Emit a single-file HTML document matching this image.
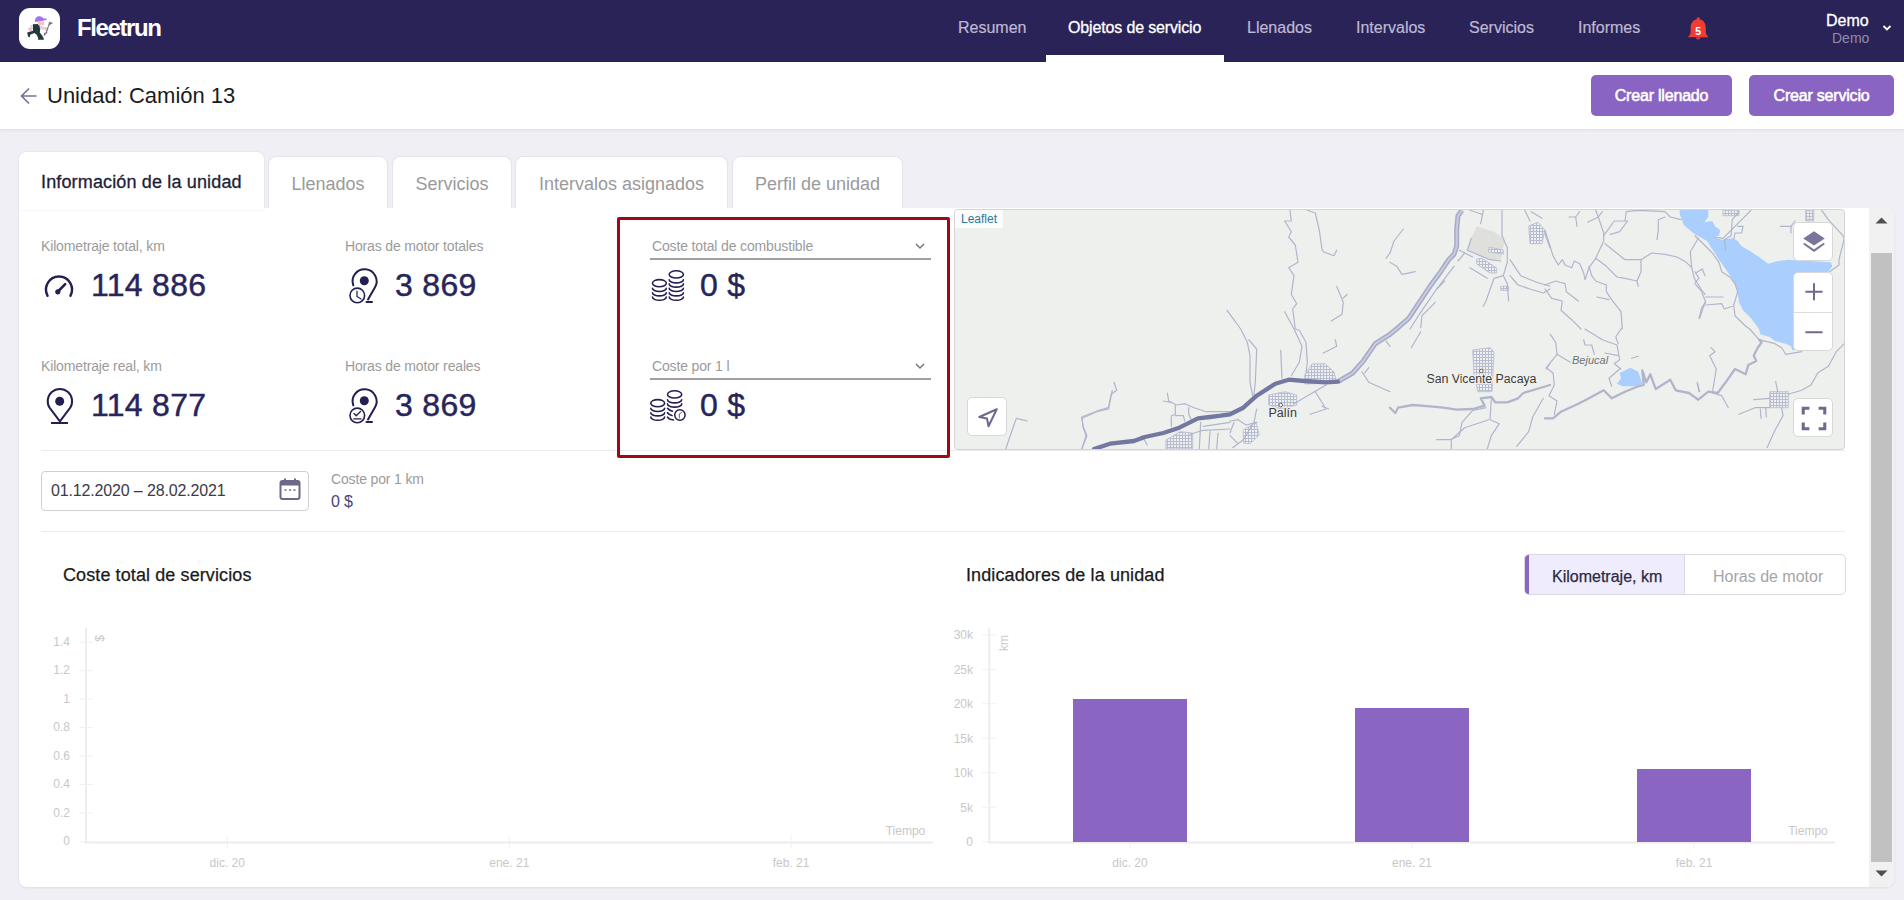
<!DOCTYPE html>
<html><head><meta charset="utf-8">
<style>
*{box-sizing:border-box;margin:0;padding:0}
html,body{width:1904px;height:900px;overflow:hidden;background:#f0eff5;font-family:"Liberation Sans",sans-serif}
.a{position:absolute;white-space:nowrap}
#hdr{position:absolute;left:0;top:0;width:1904px;height:62px;background:#2a2358}
#logo{left:19px;top:8px;width:41px;height:41px;background:#fff;border-radius:11px}
.brand{left:77px;top:14px;font-size:24px;font-weight:bold;color:#fff;letter-spacing:-1.4px}
.nav{top:19px;font-size:16px;color:#bdb9d3;-webkit-text-stroke:0.2px #bdb9d3}
.nav.act{color:#fff;-webkit-text-stroke:0.3px #fff;letter-spacing:-0.15px}
#uline{left:1046px;top:55px;width:178px;height:7px;background:#fff}
#sub{position:absolute;left:0;top:62px;width:1904px;height:67px;background:#fff;box-shadow:0 1px 3px rgba(0,0,0,0.08)}
.title{left:47px;top:83px;font-size:22px;color:#1b1b1b}
.btn{top:75px;height:41px;background:#8a64c2;border-radius:5px;color:#fff;font-size:16px;font-weight:normal;-webkit-text-stroke:0.55px #fff;letter-spacing:-0.2px;text-align:center;line-height:41px}
.tab{top:157px;height:51px;background:#fff;border-radius:7px 7px 0 0;color:#9a9a9a;font-size:18px;line-height:55px;text-align:center;box-shadow:0 0 1px 1px rgba(0,0,0,0.05)}
.tab.act{top:152px;height:58px;color:#1e1e36;font-size:18px;line-height:61px;z-index:2;box-shadow:0 0 2px 0 rgba(0,0,0,0.12);text-align:left;padding-left:22px;-webkit-text-stroke:0.3px #1e1e36;letter-spacing:0.15px}
#card{left:19px;top:208px;width:1875px;height:679px;background:#fff;border-radius:0 8px 8px 8px;box-shadow:0 1px 3px rgba(0,0,0,0.08)}
.lbl{font-size:14px;color:#9b9b9b;letter-spacing:-0.15px}
.val{font-size:32px;font-weight:normal;color:#27255a;letter-spacing:0.3px;-webkit-text-stroke:0.45px #27255a}
.mbtn{background:#fff;border:1px solid #d8d8d8;border-radius:5px;overflow:hidden}
.hr{height:1px;background:#ececf0}
</style></head><body>
<div id="hdr"></div>

<div class="a brand">Fleetrun</div>
<div class="a nav" style="left:958px">Resumen</div>
<div class="a nav act" style="left:1068px">Objetos de servicio</div>
<div class="a nav" style="left:1247px">Llenados</div>
<div class="a nav" style="left:1356px">Intervalos</div>
<div class="a nav" style="left:1469px">Servicios</div>
<div class="a nav" style="left:1578px">Informes</div>
<div class="a" id="uline"></div>
<div class="a" style="left:1826px;top:12px;font-size:16px;color:#fff;-webkit-text-stroke:0.3px #fff">Demo</div>
<div class="a" style="left:1832px;top:30px;font-size:14px;color:#8f8aae">Demo</div>


<!-- header icons -->
<svg class="a" style="left:19px;top:8px" width="41" height="41" viewBox="0 0 41 41">
 <rect x="0" y="0" width="41" height="41" rx="11" fill="#fff"/>
 <path d="M11 17.5 L14.5 16 L15.5 20.5 L12.5 22 Z" fill="#dadae2"/>
 <path d="M19.5 17 L24 18.5 L27 20 L26 22 L21 21 Z" fill="#d6d6de"/>
 <path d="M14 16.2 L20 16 L21.2 21.5 L20.8 24.5 L23.5 28 L24.5 30 L25 31.8 L19 31.8 L19.2 30 L17.8 27 L15.5 25 L11.5 26.5 L10.5 29.5 L9 28.5 L8.2 24.5 L14 22.8 Z" fill="#223a3a"/>
 <circle cx="11.2" cy="21.2" r="1.9" fill="#f3bfc0"/>
 <circle cx="27.6" cy="21" r="1.9" fill="#f3bfc0"/>
 <path d="M18.7 13.5 L25 13.5 L25 17.2 L19 17.2 Z" fill="#f4c2c2"/>
 <path d="M15.9 13.7 C15.9 9.5 18 8.2 20.2 8.2 C22.6 8.2 24.1 9.4 24.4 10.5 L27.8 10.4 L27.6 11.8 L24 12.8 L16 13.9 Z" fill="#a472ee"/>
 <path d="M30 14 L29.5 16.2 L28 21 L26.6 24.5 L25.2 25 L24.6 27.5 L26 27.8 L26.8 25.8 L28.2 25.5 L28.2 23.5 L30 18 L31.5 16.4 L33.5 15.5 L33.7 14.2 L32.2 14.8 L31.4 13.8 Z" fill="#777"/>
</svg>
<svg class="a" style="left:1686px;top:16px" width="25" height="26" viewBox="0 0 25 26">
 <circle cx="12.2" cy="2.9" r="1.6" fill="#f03d33"/>
 <path d="M12.2 3.3 C6.8 3.3 4.6 7.5 4.6 12 L4.6 16 C4.6 18 3.8 19.2 2.4 20.2 L2.4 21.3 L22 21.3 L22 20.2 C20.6 19.2 19.8 18 19.8 16 L19.8 12 C19.8 7.5 17.6 3.3 12.2 3.3 Z" fill="#f03d33"/>
 <path d="M9.9 21.3 A2.3 2.4 0 0 0 14.5 21.3 Z" fill="#dc3440"/>
 <text x="12.2" y="19" font-family="Liberation Sans" font-weight="bold" font-size="10.5" fill="#fff" text-anchor="middle">5</text>
</svg>
<svg class="a" style="left:1880px;top:22px" width="14" height="12" viewBox="0 0 14 12"><path d="M3.5 4 L7 7.5 L10.5 4" fill="none" stroke="#fff" stroke-width="1.8"/></svg>

<div id="sub"></div>
<svg class="a" style="left:18px;top:85px" width="22" height="22" viewBox="0 0 22 22"><path d="M18.5 11 H4 M11 3.5 L3.5 11 L11 18.5" fill="none" stroke="#76739a" stroke-width="1.7"/></svg>

<div class="a title">Unidad: Camión 13</div>
<div class="a btn" style="left:1591px;width:141px">Crear llenado</div>
<div class="a btn" style="left:1749px;width:145px">Crear servicio</div>

<div class="a tab act" style="left:19px;width:245px">Información de la unidad</div>
<div class="a tab" style="left:269px;width:118px">Llenados</div>
<div class="a tab" style="left:393px;width:118px">Servicios</div>
<div class="a tab" style="left:516px;width:211px">Intervalos asignados</div>
<div class="a tab" style="left:733px;width:169px">Perfil de unidad</div>

<div class="a" id="card"></div>

<!-- card content -->
<div class="a lbl" style="left:41px;top:238px;line-height:16px">Kilometraje total, km</div>
<div class="a lbl" style="left:345px;top:238px;line-height:16px">Horas de motor totales</div>
<div class="a lbl" style="left:41px;top:358px;line-height:16px">Kilometraje real, km</div>
<div class="a lbl" style="left:345px;top:358px;line-height:16px">Horas de motor reales</div>
<div class="a val" style="left:91px;top:267px;line-height:36px">114 886</div>
<div class="a val" style="left:395px;top:267px;line-height:36px">3 869</div>
<div class="a val" style="left:91px;top:387px;line-height:36px">114 877</div>
<div class="a val" style="left:395px;top:387px;line-height:36px">3 869</div>
<div class="a val" style="left:700px;top:267px;line-height:36px">0 $</div>
<div class="a val" style="left:700px;top:387px;line-height:36px">0 $</div>

<!-- icons -->
<svg class="a" style="left:0;top:0" width="1000" height="460" viewBox="0 0 1000 460">
 <g fill="none" stroke="#231f52" stroke-width="2.4" stroke-linecap="round">
  <path d="M47.6 295.8 A13 13 0 1 1 70.4 295.8"/>
 </g>
 <g fill="#231f52" stroke="#231f52">
  <path d="M57.5 292 L65.2 284.2" stroke-width="2.6" stroke-linecap="round"/>
  <circle cx="57.8" cy="291.8" r="2.6" stroke="none"/>
 </g>
 <!-- pin -->
 <g fill="none" stroke="#231f52" stroke-width="2">
  <path d="M59.9 421.3 L49.9 408.2 A12.2 12.2 0 1 1 69.9 408.2 Z" stroke-linejoin="round"/>
  <path d="M51 423 H68" stroke-width="2"/>
 </g>
 <circle cx="59.7" cy="401.2" r="4.5" fill="#231f52"/>
 <!-- horas totales -->
 <g fill="none" stroke="#231f52" stroke-width="2" stroke-linecap="round">
  <path d="M353.3 285.3 A12 12 0 1 1 375 287.2 L368 299.5"/>
  <path d="M366.5 302 H372" stroke-width="2"/>
  <circle cx="357.3" cy="295.4" r="7.3" stroke-width="1.6"/>
  <path d="M357 291 V296.5 L361 299" stroke-width="1.2"/>
 </g>
 <circle cx="364.3" cy="280.8" r="4.5" fill="#231f52"/>
 <!-- horas reales -->
 <g fill="none" stroke="#231f52" stroke-width="2" stroke-linecap="round">
  <path d="M353.3 405.3 A12 12 0 1 1 375 407.2 L368 419.5"/>
  <path d="M366.5 422 H372" stroke-width="2"/>
  <circle cx="357.3" cy="415.4" r="7.3" stroke-width="1.6"/>
  <path d="M354 413.5 L356.2 415.8 L360.5 411.5" stroke-width="1.3"/>
  <path d="M353.8 418.8 H361" stroke-width="1.3"/>
 </g>
 <circle cx="364.3" cy="400.8" r="4.5" fill="#231f52"/>
 <!-- coins 1 -->
 <g fill="none" stroke="#231f52" stroke-width="1.6" stroke-linecap="round">
  <ellipse cx="659.4" cy="283.2" rx="6.9" ry="3.6"/>
  <path d="M652.5 288.3 A6.9 3.2 0 0 0 666.3 288.3"/>
  <path d="M652.5 292.7 A6.9 3.2 0 0 0 666.3 292.7"/>
  <path d="M652.5 297.1 A6.9 3.2 0 0 0 666.3 297.1"/>
  <ellipse cx="676.3" cy="274.4" rx="7.1" ry="3.6"/>
  <path d="M669.2 279.7 A7.1 3.2 0 0 0 683.4 279.7"/>
  <path d="M669.2 283.9 A7.1 3.2 0 0 0 683.4 283.9"/>
  <path d="M669.2 288.3 A7.1 3.2 0 0 0 683.4 288.3"/>
  <path d="M669.2 292.7 A7.1 3.2 0 0 0 683.4 292.7"/>
  <path d="M669.2 297.1 A7.1 3.2 0 0 0 683.4 297.1"/>
 </g>
 <!-- coins 2 -->
 <g fill="none" stroke="#231f52" stroke-width="1.6" stroke-linecap="round">
  <ellipse cx="657.7" cy="403.2" rx="6.9" ry="3.6"/>
  <path d="M650.8 408.3 A6.9 3.2 0 0 0 664.6 408.3"/>
  <path d="M650.8 412.7 A6.9 3.2 0 0 0 664.6 412.7"/>
  <path d="M650.8 417.1 A6.9 3.2 0 0 0 664.6 417.1"/>
  <ellipse cx="674.6" cy="394.4" rx="7.1" ry="3.6"/>
  <path d="M667.5 399.7 A7.1 3.2 0 0 0 681.7 399.7"/>
  <path d="M667.5 403.9 A7.1 3.2 0 0 0 681.7 403.9"/>
  <path d="M667.5 408.3 Q669 410.5 672.5 411.2"/>
  <path d="M667.5 412.7 Q669 414.9 672 415.5"/>
  <path d="M667.5 417.1 Q669 419.5 673.5 420"/>
  <circle cx="679.9" cy="415" r="5.2" stroke-width="1.5"/>
  <path d="M679.3 418 V414 L681.5 412.5" stroke-width="1" stroke="#6a5a6a"/>
 </g>
</svg>

<!-- dropdowns -->
<div class="a lbl" style="left:652px;top:238px;line-height:16px">Coste total de combustible</div>
<div class="a" style="left:650px;top:258px;width:281px;height:2px;background:#a0a0a0"></div>
<div class="a lbl" style="left:652px;top:358px;line-height:16px">Coste por 1 l</div>
<div class="a" style="left:650px;top:378px;width:281px;height:2px;background:#a0a0a0"></div>
<svg class="a" style="left:912px;top:240px" width="16" height="12"><path d="M4 4 L8 8 L12 4" fill="none" stroke="#777" stroke-width="1.5"/></svg>
<svg class="a" style="left:912px;top:360px" width="16" height="12"><path d="M4 4 L8 8 L12 4" fill="none" stroke="#777" stroke-width="1.5"/></svg>


<div class="a hr" style="left:41px;top:450px;width:1804px"></div>
<div class="a" style="left:617px;top:217px;width:333px;height:241px;border:3px solid #a10814;border-radius:2px"></div>

<!-- date -->
<div class="a" style="left:41px;top:471px;width:268px;height:40px;border:1px solid #cfcfd4;border-radius:4px"></div>
<div class="a" style="left:51px;top:482px;font-size:16px;line-height:18px;color:#3a3a48;letter-spacing:-0.15px">01.12.2020 – 28.02.2021</div>
<svg class="a" style="left:278px;top:477px" width="24" height="24" viewBox="0 0 24 24"><rect x="2.5" y="4" width="19" height="18" rx="2" fill="none" stroke="#6f6788" stroke-width="2"/><rect x="2.5" y="4" width="19" height="4.5" fill="#6f6788"/><path d="M7 1.5V6M17 1.5V6" stroke="#6f6788" stroke-width="2"/><path d="M6.5 13h2M11 13h2M15.5 13h2" stroke="#6f6788" stroke-width="1.6"/></svg>
<div class="a lbl" style="left:331px;top:471px;line-height:16px">Coste por 1 km</div>
<div class="a" style="left:331px;top:492px;font-size:16px;line-height:19px;color:#46447a;letter-spacing:-0.2px">0 $</div>
<div class="a hr" style="left:41px;top:531px;width:1804px"></div>


<!-- map -->
<div class="a" style="left:954px;top:209px;width:891px;height:241px;border:1px solid #d4d4d4;border-radius:4px;overflow:hidden;background:#eef0ee">
<svg width="891" height="241" viewBox="954 209 891 241" style="position:absolute;left:-1px;top:-1px">
<polygon points="1679.7,209.0 1708.3,209.0 1708.3,217.0 1704.3,222.3 1712.3,221.0 1715.0,226.3 1720.3,230.3 1719.0,235.7 1713.7,237.0 1721.7,239.7 1732.3,238.3 1737.7,241.0 1741.7,246.3 1751.0,251.7 1759.0,257.0 1768.3,263.7 1777.7,261.0 1788.3,259.7 1831.0,262.3 1832.3,266.3 1828.3,271.7 1815.0,275.0 1815.0,345.0 1792.3,350.3 1791.0,346.3 1785.7,343.7 1775.0,341.0 1769.7,337.0 1760.3,334.3 1759.0,329.0 1751.0,318.3 1743.0,310.3 1739.0,302.3 1736.3,286.3 1728.3,273.0 1719.0,259.7 1707.0,241.0 1695.0,234.3 1691.7,231.7 1683.7,225.0 1679.7,214.0" fill="#aacffe"/>
<polygon points="1619.7,373.0 1630.3,367.7 1638.3,371.7 1642.3,383.7 1637.0,386.3 1622.3,386.3 1617.0,383.7 1621.0,378.3" fill="#aacffe"/>
<polygon points="1476.7,226.3 1494.0,231.7 1504.7,239.7 1500.7,261.0 1490.0,259.7 1467.3,250.3 1471.3,238.3" fill="#dfe0dc"/>
<defs><pattern id="grid" width="3" height="3" patternUnits="userSpaceOnUse"><rect width="3" height="3" fill="#eef0ee"/><path d="M0 0.5H3M0.5 0V3" stroke="#b8bcd0" stroke-width="1"/></pattern></defs>
<g fill="url(#grid)" stroke="#c0c3d6" stroke-width="1"><polygon points="1304.7,375.0 1312.0,364.0 1325.0,363.7 1334.0,372.0 1336.7,383.0 1305.0,384.0"/><polygon points="1268.7,395.0 1285.0,391.7 1296.7,395.0 1296.7,405.0 1280.0,409.0 1268.7,405.0"/><polygon points="1472.7,350.0 1490.0,347.7 1494.0,352.0 1492.0,391.7 1478.0,391.7 1474.0,375.0"/><polygon points="1769.7,391.7 1788.3,391.7 1788.3,407.7 1769.7,407.7"/><polygon points="1166.0,440.0 1180.0,431.7 1192.7,433.0 1192.7,449.0 1166.0,449.0"/><polygon points="1243.3,430.0 1256.0,422.3 1259.3,435.0 1250.0,443.7 1243.3,443.0"/><polygon points="1528.7,226.0 1538.0,222.3 1544.7,230.0 1542.0,243.7 1530.0,243.7"/><polygon points="1476.7,259.0 1482.0,258.3 1496.7,268.0 1496.7,273.0 1490.0,273.0 1476.7,264.0"/><polygon points="1488.7,247.0 1503.3,250.0 1503.3,254.3 1488.7,252.0"/><polygon points="1500.7,286.3 1508.7,286.3 1508.7,290.3 1500.7,290.3"/><polygon points="1723.0,210.3 1739.0,210.3 1739.0,215.7 1723.0,215.7"/><polygon points="1805.7,210.3 1813.7,210.3 1813.7,221.0 1805.7,221.0"/></g>
<g fill="none" stroke="#b1b5cb" stroke-width="1.2" stroke-linejoin="round" stroke-linecap="round"><path d="M1545.0 230.3 L1553.0 255.7 L1558.3 265.0 L1562.3 259.7 L1565.0 265.0 L1571.7 267.7 L1574.3 261.0 L1579.7 263.7 L1583.7 273.0 L1585.0 279.7 L1589.0 267.7 L1595.7 258.3 L1603.7 241.0 L1603.7 233.0 L1598.3 217.0 L1595.7 210.3"/><path d="M1595.7 258.3 L1606.3 266.3 L1617.0 277.0 L1625.0 278.3 L1637.0 281.0 L1638.3 286.3"/><path d="M1637.0 281.0 L1641.0 271.7 L1641.0 259.7 L1625.0 259.7 L1605.0 243.7"/><path d="M1641.0 259.7 L1651.7 253.0 L1665.0 254.3 L1677.0 257.0 L1686.3 262.3 L1691.7 267.7 L1694.3 278.3 L1701.0 289.0 L1705.0 294.3"/><path d="M1691.7 267.7 L1690.3 251.7 L1698.3 238.3"/><path d="M1603.7 235.7 L1614.3 221.0 L1627.7 221.0 L1619.7 231.7 L1610.3 234.3"/><path d="M1625.0 221.0 L1626.3 211.7 L1638.3 210.3 L1665.0 211.7 L1670.3 217.0 L1681.0 219.7"/><path d="M1665.0 217.0 L1658.3 219.7 L1658.3 230.3 L1657.0 239.7"/><path d="M1589.0 266.3 L1591.7 275.7 L1595.7 281.0 L1606.3 285.0 L1606.3 291.7 L1611.7 299.7 L1621.0 311.7 L1622.3 329.0 L1621.0 329.0"/><path d="M1597.0 297.0 L1609.0 299.7"/><path d="M1545.0 285.0 L1555.7 281.0 L1565.0 283.7 L1566.3 291.7 L1578.3 301.0"/><path d="M1545.0 289.0 L1551.7 298.3 L1562.3 301.0 L1561.0 310.3 L1571.7 319.7 L1581.0 329.0"/><path d="M1569.0 217.0 L1575.7 217.0 L1577.0 226.3"/><path d="M1575.7 217.0 L1579.7 211.7"/><path d="M1587.7 222.3 L1598.3 217.0 L1602.3 211.7"/><path d="M1705.0 302.3 L1699.7 318.3"/><path d="M1695.7 273.0 L1702.3 269.0 L1705.0 275.7"/><path d="M1550.3 334.3 L1555.7 342.3 L1557.0 354.3 L1570.3 362.3"/><path d="M1557.0 354.3 L1546.3 367.7 L1553.0 373.0 L1554.3 385.0 L1549.0 395.7 L1557.0 401.0 L1554.3 414.3"/><path d="M1585.0 329.0 L1602.3 339.7 L1617.0 345.0 L1619.7 359.7 L1614.3 363.7 L1621.0 369.0"/><path d="M1621.0 329.0 L1615.7 337.0 L1618.3 343.7"/><path d="M1619.7 369.0 L1609.0 378.3 L1611.7 386.3"/><path d="M1583.7 339.7 L1585.0 345.0 L1591.7 345.0 L1594.3 354.3"/><path d="M1605.0 353.0 L1618.3 355.7"/><path d="M1631.7 358.3 L1638.3 356.3"/><path d="M1697.0 382.3 L1699.7 391.7"/><path d="M1695.0 235.7 L1705.7 246.3 L1712.3 253.0 L1719.0 262.3 L1721.7 271.7 L1729.7 277.0 L1735.0 283.7 L1737.7 291.7 L1733.7 305.0 L1735.0 315.7 L1745.7 326.3 L1749.7 329.0 L1759.0 339.7 L1775.0 343.7 L1781.7 347.7 L1785.7 354.3 L1801.7 351.7"/><path d="M1695.0 271.7 L1699.0 278.3 L1695.0 282.3"/><path d="M1695.0 283.7 L1701.7 291.7 L1705.7 302.3 L1701.7 307.7 L1699.0 318.3"/><path d="M1705.7 297.0 L1723.0 297.0"/><path d="M1705.7 305.0 L1721.7 303.7 L1724.3 309.0 L1732.3 306.3"/><path d="M1713.7 237.0 L1723.0 238.3 L1735.0 226.3 L1751.0 210.3"/><path d="M1725.7 250.3 L1724.3 239.7 L1731.0 235.7 L1732.3 219.7 L1739.0 211.7"/><path d="M1733.7 239.7 L1735.0 233.0 L1741.7 233.0 L1743.0 226.3 L1737.7 226.3"/><path d="M1780.3 226.3 L1791.0 226.3 L1791.0 233.0"/><path d="M1791.0 226.3 L1795.0 221.0"/><path d="M1821.7 210.3 L1828.3 219.7 L1843.0 235.7 L1844.3 238.3 L1839.0 259.7 L1839.0 265.0 L1829.7 271.7"/><path d="M1711.0 347.7 L1715.0 351.7 L1709.7 355.7 L1716.3 369.0 L1712.3 393.0 L1721.7 395.7 L1728.3 407.7"/><path d="M1697.7 383.7 L1699.0 391.7"/><path d="M1844.3 343.7 L1836.3 351.7 L1828.3 366.3 L1817.7 373.0 L1811.0 385.0 L1801.7 390.3 L1788.3 394.3"/><path d="M1781.7 407.7 L1783.0 415.7 L1775.0 430.3 L1767.0 447.7"/><path d="M1739.0 414.3 L1755.0 407.7 L1769.7 407.7"/><path d="M1753.7 399.7 L1769.7 398.3"/><path d="M1760.3 409.0 L1761.0 418.3"/><path d="M1765.7 407.7 L1766.3 417.0"/><path d="M1775.7 381.7 L1777.7 391.7"/><path d="M1454.0 266.3 L1436.7 289.0 L1419.3 314.3 L1410.0 329.0"/><path d="M1459.3 250.3 L1472.7 257.0"/><path d="M1464.7 253.0 L1458.0 261.0"/><path d="M1444.7 281.0 L1436.7 289.0"/><path d="M1435.3 302.3 L1422.0 315.7 L1420.7 327.7"/><path d="M1403.3 229.0 L1394.0 241.0 L1390.0 253.0"/><path d="M1390.0 262.3 L1396.7 266.3 L1402.0 274.3 L1415.3 271.7"/><path d="M1502.0 210.3 L1502.0 235.7 L1507.3 247.7 L1507.3 262.3 L1503.3 275.7 L1494.0 278.3 L1486.0 301.0 L1483.3 306.3"/><path d="M1470.0 267.7 L1487.3 278.3"/><path d="M1503.3 275.7 L1507.3 283.7 L1508.7 301.0"/><path d="M1510.0 259.7 L1520.7 275.7 L1536.7 282.3 L1550.0 286.3"/><path d="M1510.0 275.7 L1518.0 285.0 L1530.0 289.0 L1543.3 293.0 L1550.0 289.0"/><path d="M1524.7 210.3 L1530.0 221.0"/><path d="M1531.3 211.7 L1542.0 218.3"/><path d="M1544.7 233.0 L1550.0 247.7"/><path d="M1483.3 210.3 L1480.7 223.7"/><path d="M1470.0 210.3 L1482.0 214.3"/><path d="M1471.3 238.3 L1467.3 250.3 L1490.0 259.7 L1500.7 261.0"/><path d="M1486.0 407.7 L1472.7 410.3 L1462.0 422.3 L1459.3 435.7 L1450.0 439.7 L1436.7 439.7"/><path d="M1491.3 399.7 L1490.0 419.7 L1499.3 423.7 L1491.3 435.7 L1487.3 449.0"/><path d="M1488.7 419.7 L1464.7 427.7 L1451.3 439.7 L1451.3 449.0"/><path d="M1543.3 398.3 L1532.7 417.0 L1528.7 431.7 L1516.7 446.3"/><path d="M1546.0 369.0 L1550.0 363.7"/><path d="M1420.7 331.7 L1411.3 347.7"/><path d="M1290.0 210.3 L1291.3 221.0 L1284.7 221.0 L1291.3 231.7 L1288.7 237.0 L1295.3 245.0 L1298.0 262.3 L1288.7 267.7 L1294.0 275.7 L1291.3 294.3 L1296.7 303.7 L1292.7 309.0 L1295.3 329.0 L1299.3 330.3 L1306.0 342.3 L1307.3 362.3 L1306.0 373.0"/><path d="M1307.3 210.3 L1315.3 213.0 L1319.3 230.3 L1322.0 249.0 L1323.3 251.7 L1334.0 255.7 L1336.7 250.3"/><path d="M1336.7 286.3 L1343.3 302.3 L1342.0 314.3 L1331.3 321.0"/><path d="M1343.3 298.0 L1347.3 294.3"/><path d="M1284.7 311.7 L1294.0 329.0 L1302.0 346.3 L1299.3 362.3 L1291.3 375.7"/><path d="M1227.0 310.3 L1230.0 314.3 L1240.7 329.0 L1247.3 342.3 L1250.0 355.7 L1250.0 382.3 L1252.7 395.7"/><path d="M1390.0 253.0 L1386.0 258.3"/><path d="M1248.7 339.7 L1256.7 349.0 L1255.3 382.3 L1254.0 394.3"/><path d="M1280.7 350.3 L1282.0 378.3"/><path d="M1335.3 339.7 L1336.7 346.3 L1323.3 353.0"/><path d="M1294.0 403.7 L1326.0 385.0"/><path d="M1315.3 391.7 L1326.0 409.0 L1310.0 414.3"/><path d="M1322.0 406.3 L1328.7 409.0"/><path d="M1362.0 371.7 L1368.7 382.3 L1390.0 391.7"/><path d="M1368.7 367.7 L1364.7 373.0"/><path d="M1386.0 341.0 L1390.0 346.3"/><path d="M1256.7 409.0 L1254.0 422.3 L1243.3 439.7 L1232.7 447.7"/><path d="M1230.0 421.0 L1238.0 419.7 L1246.0 425.0 L1256.7 422.3"/><path d="M1230.0 435.7 L1238.0 443.7"/><path d="M1234.0 422.3 L1230.0 433.0"/><path d="M1114.0 382.3 L1116.7 390.3 L1111.3 394.3 L1108.7 409.0 L1096.7 411.7 L1082.0 418.3 L1083.3 427.7 L1086.0 435.7 L1082.0 449.0"/><path d="M1167.3 393.0 L1168.7 401.0 L1176.7 405.0 L1184.7 403.7 L1194.0 407.7 L1206.0 411.7 L1230.0 411.7"/><path d="M1163.3 401.0 L1171.3 402.3"/><path d="M1175.3 405.0 L1175.3 414.3 L1171.3 415.7 L1171.3 426.3"/><path d="M1175.3 415.7 L1183.3 415.7 L1184.7 421.0"/><path d="M1188.7 407.7 L1188.7 414.3 L1192.7 422.3"/><path d="M1190.0 434.3 L1203.3 430.3 L1230.0 429.0"/><path d="M1203.3 426.3 L1230.0 422.3"/><path d="M1200.7 422.3 L1199.3 449.0"/><path d="M1210.0 431.7 L1208.7 449.0"/><path d="M1218.0 433.0 L1216.7 449.0"/><path d="M1142.0 435.7 L1147.3 445.0"/><path d="M1005.7 449.0 L1016.3 418.3 L1021.7 419.7 L1027.0 421.0"/><path d="M1081.7 449.0 L1087.0 435.7 L1083.0 426.3 L1081.7 417.0 L1099.0 410.3 L1108.3 407.7 L1112.3 390.3"/></g>
<g fill="none" stroke="#b1b5cb" stroke-width="2.3" stroke-linejoin="round" stroke-linecap="round"><path d="M1545.0 418.3 L1553.0 418.3 L1561.0 411.7 L1578.3 403.7 L1589.0 398.3 L1603.7 390.3 L1611.7 398.3 L1625.0 391.7 L1638.3 386.3 L1643.7 385.0 L1642.3 370.3 L1646.3 382.3 L1650.3 374.3 L1655.7 389.0 L1670.3 379.7 L1675.7 390.3 L1689.0 393.0 L1698.3 399.7 L1708.3 391.7 L1717.7 393.0 L1725.7 382.3 L1735.0 369.0 L1745.7 374.3 L1748.3 365.0 L1756.3 361.0 L1753.7 355.7 L1757.7 347.7 L1761.7 342.3 L1759.0 339.7"/><path d="M1390.0 407.7 L1395.3 413.0 L1398.0 407.7 L1412.7 405.0 L1430.0 406.3 L1443.3 407.7 L1456.7 409.7 L1472.7 409.0 L1484.7 405.7 L1480.7 398.3 L1491.3 397.0 L1495.3 402.3 L1507.3 402.3 L1518.0 398.3 L1523.3 393.0 L1536.7 389.0 L1550.0 385.0"/></g>
<path d="M1338.0 381.7 L1352.7 373.0 L1363.3 361.0 L1375.3 343.7 L1390.0 334.3 L1398.0 327.7 L1408.7 318.3 L1419.3 302.3 L1430.0 286.3 L1440.7 271.7 L1448.7 259.7 L1454.0 254.3 L1456.7 246.3 L1456.7 229.0 L1458.0 215.7 L1462.0 210.3" fill="none" stroke="#a6aac6" stroke-width="5" stroke-linejoin="round"/>
<path d="M1338.0 381.7 L1352.7 373.0 L1363.3 361.0 L1375.3 343.7 L1390.0 334.3 L1398.0 327.7 L1408.7 318.3 L1419.3 302.3 L1430.0 286.3 L1440.7 271.7 L1448.7 259.7 L1454.0 254.3 L1456.7 246.3 L1456.7 229.0 L1458.0 215.7 L1462.0 210.3" fill="none" stroke="#c9cce0" stroke-width="2" stroke-linejoin="round"/>
<path d="M1094.0 449.0 L1110.0 443.7 L1134.0 441.0 L1144.7 437.0 L1163.3 433.0 L1179.3 427.7 L1198.0 418.3 L1210.0 417.0 L1220.7 415.7 L1230.0 414.3 L1243.3 407.7 L1256.7 395.7 L1275.3 383.7 L1288.7 379.7 L1304.7 381.0 L1326.0 382.3 L1338.0 381.7" fill="none" stroke="#7378a1" stroke-width="4.3" stroke-linejoin="round" stroke-linecap="round"/>
<circle cx="1280.7" cy="405" r="1.8" fill="#fff" stroke="#666" stroke-width="1"/>
<circle cx="1481.3" cy="371" r="1.8" fill="#fff" stroke="#666" stroke-width="1"/>
<g font-family="Liberation Sans" fill="#3a3a3a" stroke="#eef0ee" stroke-width="2.5" paint-order="stroke" stroke-linejoin="round"><text x="1268.5" y="417" font-size="12.5">Palín</text><text x="1426.5" y="383" font-size="12.5" textLength="110">San Vicente Pacaya</text><text x="1572" y="364.3" font-size="11" font-style="italic" fill="#707070">Bejucal</text></g>
</svg>
<div style="position:absolute;left:0;top:0;width:48px;height:18px;background:rgba(255,255,255,0.8);font-size:12px;line-height:18px;color:#2a7898;padding-left:6px">Leaflet</div>
</div>
<div class="a mbtn" style="left:967px;top:397px;width:40px;height:39px"><svg width="40" height="39" viewBox="0 0 39 38"><path d="M28 11 L11 18.5 L18.5 20 L20 27.5 Z" fill="none" stroke="#6c6a8e" stroke-width="2" stroke-linejoin="round"/></svg></div>
<div class="a mbtn" style="left:1793px;top:222px;width:40px;height:39px"><svg width="40" height="39" viewBox="0 0 39 38"><path d="M19.5 8 L30 15 L19.5 22 L9 15 Z" fill="#7a7699"/><path d="M9.5 20 L19.5 27 L29.5 20" fill="none" stroke="#7a7699" stroke-width="2"/></svg></div>
<div class="a mbtn" style="left:1793px;top:272px;width:40px;height:79px"><div style="position:absolute;left:0;top:39px;width:38px;height:1px;background:#dcdcdc"></div><svg width="40" height="79" viewBox="0 0 39 78"><path d="M19.5 10 V27 M11 18.5 H28" stroke="#6c6a8e" stroke-width="2"/><path d="M11 58.5 H28" stroke="#6c6a8e" stroke-width="2"/></svg></div>
<div class="a mbtn" style="left:1793px;top:398px;width:40px;height:39px"><svg width="40" height="39" viewBox="0 0 39 38"><path d="M9 15 V9 H15 M24 9 H30 V15 M30 23 V29 H24 M15 29 H9 V23" fill="none" stroke="#6c6a8e" stroke-width="3"/></svg></div>

<!-- scrollbar -->
<div class="a" style="left:1869px;top:208px;width:25px;height:679px;background:#f1f1f1;border-radius:0 8px 8px 0"></div>
<div class="a" style="left:1871px;top:253px;width:21px;height:609px;background:#c1c1c1"></div>
<svg class="a" style="left:1869px;top:208px" width="25" height="678"><path d="M6.5 15.5 L12.5 9.5 L18.5 15.5 Z" fill="#505050"/><path d="M6.5 662.5 L12.5 668.5 L18.5 662.5 Z" fill="#505050"/></svg>

<svg class="a" style="left:0;top:0" width="1904" height="900" viewBox="0 0 1904 900">
<g stroke="#ececec" stroke-width="2" fill="none">
<path d="M86 628 V842.5 H933"/>
<path d="M989.3 628 V842.5 H1835"/>
</g>
<g stroke="#f0f0f0" stroke-width="1" fill="none">
<path d="M79 642.2 H93"/><path d="M79 670.6 H93"/><path d="M79 699.1 H93"/><path d="M79 727.6 H93"/><path d="M79 756.0 H93"/><path d="M79 784.5 H93"/><path d="M79 813.0 H93"/><path d="M79 841.8 H93"/><path d="M982 634.9 H996"/><path d="M982 669.4 H996"/><path d="M982 703.8 H996"/><path d="M982 738.3 H996"/><path d="M982 772.8 H996"/><path d="M982 807.2 H996"/><path d="M982 841.7 H996"/><path d="M227.3 835 V848.5"/><path d="M509.3 835 V848.5"/><path d="M791 835 V848.5"/><path d="M1130 835 V848.5"/><path d="M1412 835 V848.5"/><path d="M1694 835 V848.5"/>
</g>
<g font-family="Liberation Sans" font-size="12" fill="#c8c8c8" text-anchor="end">
<text x="70" y="645.7">1.4</text><text x="70" y="674.1">1.2</text><text x="70" y="702.6">1</text><text x="70" y="731.1">0.8</text><text x="70" y="759.5">0.6</text><text x="70" y="788.0">0.4</text><text x="70" y="816.5">0.2</text><text x="70" y="845.3">0</text><text x="973" y="639.1999999999999">30k</text><text x="973" y="673.6999999999999">25k</text><text x="973" y="708.0999999999999">20k</text><text x="973" y="742.5999999999999">15k</text><text x="973" y="777.0999999999999">10k</text><text x="973" y="811.5">5k</text><text x="973" y="846.0">0</text>
</g>
<g font-family="Liberation Sans" font-size="12" fill="#c8c8c8" text-anchor="middle">
<text x="227.3" y="867">dic. 20</text><text x="509.3" y="867">ene. 21</text><text x="791" y="867">feb. 21</text><text x="1130" y="867">dic. 20</text><text x="1412" y="867">ene. 21</text><text x="1694" y="867">feb. 21</text><text x="905.5" y="835" >Tiempo</text><text x="1808" y="835">Tiempo</text><text transform="translate(103.5 638.5) rotate(-90)" x="0" y="0">$</text><text transform="translate(1007.5 643) rotate(-90)" x="0" y="0">km</text>
</g>
<g fill="#8a65c2">
<rect x="1073" y="699" width="114" height="143"/><rect x="1355" y="708" width="114" height="134"/><rect x="1637" y="769" width="114" height="73"/>
</g>
</svg>
<div class="a" style="left:63px;top:564px;font-size:18px;line-height:22px;color:#1a1a1a;-webkit-text-stroke:0.25px #1a1a1a;letter-spacing:0.1px">Coste total de servicios</div>
<div class="a" style="left:966px;top:564px;font-size:18px;line-height:22px;color:#1a1a1a;-webkit-text-stroke:0.25px #1a1a1a;letter-spacing:0.1px">Indicadores de la unidad</div>
<div class="a" style="left:1524px;top:554px;width:322px;height:41px;border:1px solid #d9d9df;border-radius:5px;overflow:hidden;background:#fff">
 <div style="position:absolute;left:-1px;top:-1px;width:161px;height:41px;background:#efecfd;border-left:5px solid #8a65c2;border-radius:4px 0 0 4px"></div>
 <div style="position:absolute;left:159px;top:0;width:1px;height:39px;background:#d9d9df"></div>
 <div style="position:absolute;left:27px;top:13px;font-size:16px;line-height:18px;color:#2a2a40;-webkit-text-stroke:0.25px #2a2a40">Kilometraje, km</div>
 <div style="position:absolute;left:188px;top:13px;font-size:16px;line-height:18px;color:#a5a5a5">Horas de motor</div>
</div>

</body></html>
